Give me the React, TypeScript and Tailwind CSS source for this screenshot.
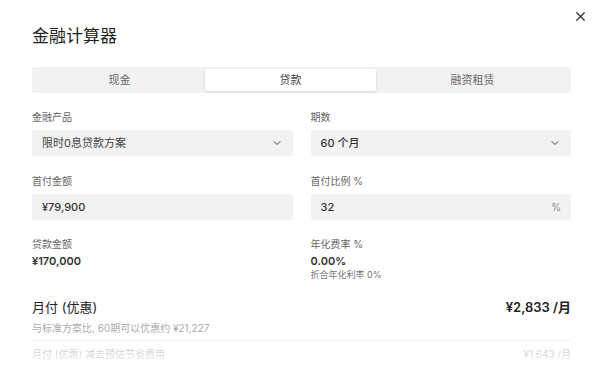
import { ChevronDown, X } from 'lucide-react';

const TABS = ['现金', '贷款', '融资租赁'];

export default function App() {
  return (
    <div
      className="relative w-[600px] h-[369px] overflow-hidden bg-white text-[#222]"
      style={{ fontFamily: 'Inter, "Noto Sans CJK SC", sans-serif' }}
    >
      <button className="absolute right-[12px] top-[9px] text-[#333]">
        <X className="w-[15px] h-[15px]" strokeWidth={2} />
      </button>

      <div className="pl-[32px] pr-[29px] pt-[24px]">
        <h1 className="text-[17px] leading-[24px] font-normal text-[#222]">金融计算器</h1>

        {/* Tabs */}
        <div className="mt-[19px] flex p-[2px] bg-[#f2f2f2] rounded-[3px] h-[26px]">
          {TABS.map((t, i) => (
            <div
              key={t}
              className={`flex-auto flex items-center justify-center text-[11px] ${
                i === 1 ? 'bg-white rounded-[2px] shadow-[0_1px_3px_rgba(0,0,0,0.12)] text-[#444]' : 'text-[#666]'
              }`}
            >
              {t}
            </div>
          ))}
        </div>

        {/* Form */}
        <div className="mt-[17px] grid grid-cols-2 gap-x-[18px]">
          <Field label="金融产品">
            <div className="h-[26px] bg-[#f2f2f2] rounded-[3px] flex items-center justify-between pl-[10px] pr-[10px] text-[11px] text-[#444]">
              <span>限时0息贷款方案</span>
              <ChevronDown className="w-[12px] h-[12px] text-[#444]" />
            </div>
          </Field>
          <Field label="期数">
            <div className="h-[26px] bg-[#f2f2f2] rounded-[3px] flex items-center justify-between pl-[10px] pr-[10px] text-[11px] text-[#333] font-medium">
              <span>60 个月</span>
              <ChevronDown className="w-[12px] h-[12px] text-[#444]" />
            </div>
          </Field>
          <Field label="首付金额" className="mt-[18px]">
            <div className="h-[26px] bg-[#f2f2f2] rounded-[3px] flex items-center pl-[10px] text-[11px] text-[#333] font-medium">
              ¥79,900
            </div>
          </Field>
          <Field label="首付比例 %" className="mt-[18px]">
            <div className="h-[26px] bg-[#f2f2f2] rounded-[3px] flex items-center justify-between pl-[10px] pr-[10px] text-[11px] text-[#333] font-medium">
              <span>32</span>
              <span className="text-[10px] text-[#888] font-normal">%</span>
            </div>
          </Field>

          <div className="mt-[17px]">
            <div className="text-[10px] leading-[14px] text-[#666]">贷款金额</div>
            <div className="mt-[3px] text-[11px] leading-[14px] font-semibold text-[#333]">¥170,000</div>
          </div>
          <div className="mt-[17px]">
            <div className="text-[10px] leading-[14px] text-[#666]">年化费率 %</div>
            <div className="mt-[3px] text-[11px] leading-[14px] font-semibold text-[#333]">0.00%</div>
            <div className="text-[9px] leading-[14px] text-[#777]">折合年化利率 0%</div>
          </div>
        </div>

        {/* Monthly */}
        <div className="mt-[16px] flex items-center justify-between">
          <span className="text-[13px] leading-[18px] text-[#222]">月付 (优惠)</span>
          <span className="text-[13px] leading-[18px] font-semibold text-[#222]">¥2,833 /月</span>
        </div>
        <div className="mt-[5px] text-[10px] leading-[14px] text-[#aaa] pb-[5px] border-b border-[#eeeeee]">
          与标准方案比, 60期可以优惠约 ¥21,227
        </div>
        <div className="mt-[6px] flex items-center justify-between text-[10px] leading-[14px] text-[#aaa]">
          <span>月付 (优惠) 减去预估节省费用</span>
          <span>¥1,643 /月</span>
        </div>
      </div>

      <div className="absolute left-0 right-0 bottom-0 h-[40px] bg-gradient-to-b from-white/0 to-white/90 pointer-events-none" />
    </div>
  );
}

function Field({
  label, children, className = '',
}: {
  label: string; children: React.ReactNode; className?: string;
}) {
  return (
    <div className={className}>
      <div className="text-[10px] leading-[14px] text-[#666] mb-[6px]">{label}</div>
      {children}
    </div>
  );
}
